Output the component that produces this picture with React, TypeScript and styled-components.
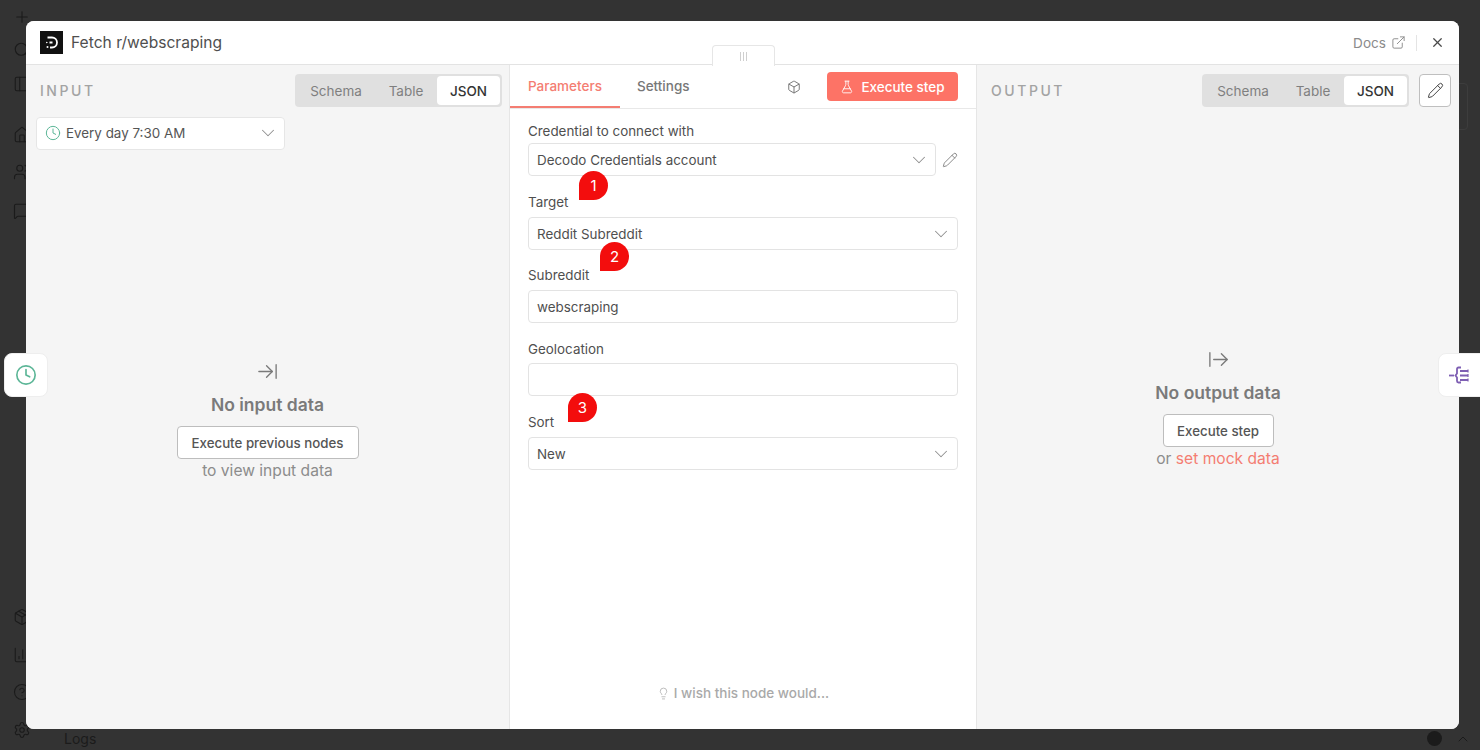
import React from "react";
import styled, { createGlobalStyle } from "styled-components";
import {
  ArrowRightFromLine,
  ArrowRightToLine,
  Box,
  ChartColumn,
  ChevronDown,
  ChevronUp,
  CircleHelp,
  Clock,
  ExternalLink,
  FlaskConical,
  House,
  Lightbulb,
  MessageSquare,
  PanelLeft,
  Pencil,
  Plus,
  Search,
  Settings,
  Users,
  Package,
  X,
} from "lucide-react";

const Global = createGlobalStyle`
  html, body { margin: 0; padding: 0; background: #333; }
  body { font-family: Inter, "Liberation Sans", sans-serif; -webkit-font-smoothing: antialiased; }
  * { box-sizing: border-box; }
`;

const Page = styled.div`
  position: relative;
  width: 1480px;
  height: 750px;
  overflow: hidden;
  background: #333333;
  display: grid;
  grid-template-columns: 44px 1fr;
`;

const Sidebar = styled.nav`
  display: flex;
  flex-direction: column;
  align-items: center;
  color: #1b1b1b;
`;

const RailIcon = styled.span<{ $mt: number }>`
  display: flex;
  margin-top: ${(p) => p.$mt}px;
`;

const Spacer = styled.div`
  flex: 1;
`;

const Main = styled.div`
  display: flex;
  flex-direction: column;
  justify-content: flex-end;
`;

const LogsBar = styled.div`
  height: 21px;
  display: flex;
  align-items: center;
  padding: 0 9px 2px 20px;
  color: #1b1b1b;
  font-size: 14px;
`;

const LogsLabel = styled.span`
  flex: 1;
`;

const LogsPopout = styled.span`
  width: 15px;
  height: 15px;
  border-radius: 50%;
  background: #1b1b1b;
  margin-right: 13px;
`;

const Modal = styled.div`
  position: absolute;
  left: 26px;
  top: 21px;
  width: 1433px;
  height: 708px;
  border-radius: 8px;
  background: #f5f5f5;
  overflow: hidden;
  display: flex;
  flex-direction: column;
`;

const Header = styled.header`
  height: 44px;
  flex: none;
  background: #fff;
  border-bottom: 1px solid #e3e3e3;
  display: flex;
  align-items: center;
  padding: 0 14px;
`;

const Logo = styled.svg`
  width: 23px;
  height: 23px;
  flex: none;
`;

const Title = styled.h1`
  margin: 0 0 0 8px;
  flex: 1;
  font-size: 15.6px;
  font-weight: 400;
  color: #4f4f4f;
`;

const DocsLink = styled.a`
  display: flex;
  align-items: center;
  gap: 5px;
  font-size: 13.6px;
  color: #8b8b8b;
`;

const Divider = styled.span`
  width: 1px;
  height: 16px;
  background: #e4e4e4;
  margin: 0 13px 0 10px;
`;

const CloseButton = styled.span`
  display: flex;
  color: #4a4a4a;
`;

const Columns = styled.div`
  flex: 1;
  min-height: 0;
  display: grid;
  grid-template-columns: 483px 468px 482px;
`;

const Panel = styled.section`
  background: #f5f5f5;
  display: flex;
  flex-direction: column;
  min-height: 0;
`;

const PanelHead = styled.div<{ $pr: number; $pl: number }>`
  height: 33px;
  margin-top: 9px;
  padding: 0 ${(p) => p.$pr}px 0 ${(p) => p.$pl}px;
  display: flex;
  align-items: center;
  justify-content: space-between;
`;

const PanelName = styled.h2`
  margin: 0;
  font-size: 14px;
  font-weight: 500;
  letter-spacing: 2.55px;
  color: #a3a3a3;
`;

const HeadRight = styled.div`
  display: flex;
  align-items: center;
  gap: 10px;
`;

const Segments = styled.div`
  height: 33px;
  width: 207px;
  padding: 2px;
  border-radius: 4px;
  background: #e0e0e0;
  display: flex;
  align-items: stretch;
`;

const Segment = styled.span<{ $on?: boolean; $w: number }>`
  width: ${(p) => p.$w}px;
  display: flex;
  align-items: center;
  justify-content: center;
  font-size: 13.5px;
  font-weight: ${(p) => (p.$on ? 500 : 400)};
  border-radius: 4px;
  background: ${(p) => (p.$on ? "#fff" : "transparent")};
  color: ${(p) => (p.$on ? "#333" : "#7f7f7f")};
`;

const EditButton = styled.span`
  width: 32px;
  height: 33px;
  display: flex;
  align-items: center;
  justify-content: center;
  background: #fff;
  border: 1px solid #bfbfbf;
  border-radius: 4px;
  color: #444;
`;

const RunPicker = styled.div`
  margin: 10px 0 0 10px;
  width: 249px;
  height: 33px;
  background: #fff;
  border: 1px solid #e6e6e6;
  border-radius: 4px;
  display: flex;
  align-items: center;
  padding: 0 5px 1px 8px;
  font-size: 13.4px;
  color: #555;
`;

const RunText = styled.span`
  flex: 1;
  margin-left: 5px;
`;

const Empty = styled.div<{ $pt: number }>`
  padding-top: ${(p) => p.$pt}px;
  display: flex;
  flex-direction: column;
  align-items: center;
  color: #7a7a7a;
`;

const EmptyTitle = styled.h3`
  margin: 11px 0 10px;
  font-size: 17.5px;
  line-height: 22px;
  font-weight: 600;
  color: #7a7a7a;
`;

const OutlineButton = styled.span<{ $w: number }>`
  width: ${(p) => p.$w}px;
  height: 33px;
  display: flex;
  align-items: center;
  justify-content: center;
  background: #fff;
  border: 1px solid #bdbdbd;
  border-radius: 4px;
  font-size: 13.3px;
  font-weight: 500;
  color: #555;
`;

const EmptyNote = styled.p`
  margin: 3px 0 0;
  font-size: 15.6px;
  line-height: 18px;
  color: #8c8c8c;
`;

const MockLink = styled.span`
  color: #f47d72;
`;

const Center = styled.section`
  position: relative;
  background: #fff;
  border-left: 1px solid #e6e6e6;
  border-right: 1px solid #e6e6e6;
  display: flex;
  flex-direction: column;
`;

const DragTab = styled.div`
  position: absolute;
  left: 202px;
  top: -20px;
  width: 63px;
  height: 21px;
  background: #fff;
  border: 1px solid #e6e6e6;
  border-bottom: none;
  border-radius: 4px 4px 0 0;
  display: flex;
  align-items: center;
  justify-content: center;
  gap: 1.5px;
`;

const DragLine = styled.i`
  width: 1.5px;
  height: 9px;
  background: #cfcfcf;
`;

const TabRow = styled.div`
  height: 44px;
  flex: none;
  border-bottom: 1px solid #e8e8e8;
  display: flex;
  align-items: flex-start;
  padding-right: 18px;
`;

const Tab = styled.span<{ $on?: boolean }>`
  height: 43px;
  padding: 1px 18px 0 ${(p) => (p.$on ? 18 : 17)}px;
  display: flex;
  align-items: center;
  font-size: 13.5px;
  font-weight: 500;
  color: ${(p) => (p.$on ? "#f47d72" : "#777")};
  border-bottom: 2px solid ${(p) => (p.$on ? "#f47d72" : "transparent")};
`;

const CubeSlot = styled.span`
  margin: 15px 26px 0 auto;
  display: flex;
  color: #666;
`;

const RunButton = styled.span`
  margin-top: 7px;
  width: 131px;
  height: 29px;
  background: #fd7366;
  border-radius: 4px;
  color: #fff;
  font-size: 13.5px;
  font-weight: 500;
  display: flex;
  align-items: center;
  justify-content: center;
  gap: 7px;
`;

const Form = styled.div`
  flex: 1;
  display: flex;
  flex-direction: column;
  padding: 13px 18px 0;
`;

const Field = styled.div<{ $mt?: number }>`
  position: relative;
  margin-top: ${(p) => p.$mt ?? 0}px;
`;

const FieldLabel = styled.label<{ $gap: number }>`
  display: block;
  font-size: 13.4px;
  line-height: 18px;
  color: #4f4f4f;
  margin-bottom: ${(p) => p.$gap}px;
`;

const FieldRow = styled.div`
  display: flex;
  align-items: center;
  gap: 6px;
  color: #777;
`;

const Control = styled.div`
  flex: 1;
  height: 33px;
  background: #fff;
  border: 1px solid #e3e3e3;
  border-radius: 4px;
  display: flex;
  align-items: center;
  justify-content: space-between;
  padding: 0 5px 0 8px;
  font-size: 13.4px;
  color: #4f4f4f;
`;

const Badge = styled.span<{ $left: number; $top: number }>`
  position: absolute;
  left: ${(p) => p.$left}px;
  top: ${(p) => p.$top}px;
  width: 29px;
  height: 29px;
  background: #f30d0d;
  border-radius: 50% 50% 50% 0;
  color: #fff;
  font-size: 15px;
  display: flex;
  align-items: center;
  justify-content: center;
`;

const Wish = styled.div`
  margin-top: auto;
  padding-bottom: 28px;
  display: flex;
  align-items: center;
  justify-content: center;
  gap: 4px;
  font-size: 13.5px;
  font-weight: 500;
  color: #a9a9a9;
`;

const SideTab = styled.div<{ $side: "left" | "right" }>`
  position: absolute;
  top: 353px;
  ${(p) => (p.$side === "left" ? "left: 4px; width: 44px; border-radius: 8px;" : "left: 1438px; width: 50px; border-radius: 8px; padding-right: 8px;")}
  height: 44px;
  background: #fff;
  border: 1px solid #eeeeee;
  display: flex;
  align-items: center;
  justify-content: center;
`;

const GhostCard = styled.div`
  position: absolute;
  left: 1450px;
  top: 83px;
  width: 18px;
  height: 47px;
  border: 1px solid #3d3d3d;
  border-radius: 4px;
`;

const Chevron = <ChevronDown size={22} strokeWidth={1.1} color="#8f8f8f" />;

export default function App() {
  return (
    <Page>
      <Global />
      <Sidebar>
        <RailIcon $mt={8}><Plus size={18} strokeWidth={1.5} /></RailIcon>
        <RailIcon $mt={15}><Search size={18} strokeWidth={1.5} /></RailIcon>
        <RailIcon $mt={16}><PanelLeft size={18} strokeWidth={1.5} /></RailIcon>
        <RailIcon $mt={33}><House size={18} strokeWidth={1.5} /></RailIcon>
        <RailIcon $mt={19}><Users size={18} strokeWidth={1.5} /></RailIcon>
        <RailIcon $mt={21}><MessageSquare size={18} strokeWidth={1.5} /></RailIcon>
        <Spacer />
        <RailIcon $mt={0}><Package size={18} strokeWidth={1.5} /></RailIcon>
        <RailIcon $mt={20}><ChartColumn size={18} strokeWidth={1.5} /></RailIcon>
        <RailIcon $mt={19}><CircleHelp size={18} strokeWidth={1.5} /></RailIcon>
        <RailIcon $mt={20}><Settings size={18} strokeWidth={1.5} /></RailIcon>
        <RailIcon $mt={11} />
      </Sidebar>
      <Main>
        <LogsBar>
          <LogsLabel>Logs</LogsLabel>
          <LogsPopout />
          <ChevronUp size={16} strokeWidth={1.5} />
        </LogsBar>
      </Main>
      <GhostCard />

      <Modal>
        <Header>
          <Logo viewBox="0 0 23 23" aria-hidden>
            <rect width="23" height="23" fill="#111" />
            <path d="M7.500 6.500h4.500a5 5 0 0 1 0 10H10" fill="none" stroke="#fff" strokeWidth="1.800" />
            <path d="M9.500 11.500h3" fill="none" stroke="#fff" strokeWidth="1.800" />
            <circle cx="7.500" cy="16" r="1" fill="#fff" />
            <circle cx="6.800" cy="11.500" r="0.800" fill="#fff" />
          </Logo>
          <Title>Fetch r/webscraping</Title>
          <DocsLink>
            Docs
            <ExternalLink size={15} strokeWidth={1.5} />
          </DocsLink>
          <Divider />
          <CloseButton><X size={15} strokeWidth={2} /></CloseButton>
        </Header>

        <Columns>
          <Panel>
            <PanelHead $pl={14} $pr={7}>
              <PanelName>INPUT</PanelName>
              <Segments>
                <Segment $w={78}>Schema</Segment>
                <Segment $w={62}>Table</Segment>
                <Segment $w={63} $on>JSON</Segment>
              </Segments>
            </PanelHead>
            <RunPicker>
              <Clock size={16} strokeWidth={1.5} color="#5cb697" />
              <RunText>Every day 7:30 AM</RunText>
              {Chevron}
            </RunPicker>
            <Empty $pt={210}>
              <ArrowRightToLine size={23} strokeWidth={1.4} />
              <EmptyTitle>No input data</EmptyTitle>
              <OutlineButton $w={182}>Execute previous nodes</OutlineButton>
              <EmptyNote>to view input data</EmptyNote>
            </Empty>
          </Panel>

          <Center>
            <DragTab>
              <DragLine />
              <DragLine />
              <DragLine />
            </DragTab>
            <TabRow>
              <Tab $on>Parameters</Tab>
              <Tab>Settings</Tab>
              <CubeSlot><Box size={14} strokeWidth={1.5} /></CubeSlot>
              <RunButton>
                <FlaskConical size={14} strokeWidth={1.5} />
                Execute step
              </RunButton>
            </TabRow>
            <Form>
              <Field>
                <FieldLabel $gap={3}>Credential to connect with</FieldLabel>
                <FieldRow>
                  <Control>Decodo Credentials account{Chevron}</Control>
                  <Pencil size={16} strokeWidth={1.3} />
                </FieldRow>
              </Field>
              <Field $mt={17}>
                <Badge $left={51} $top={-22}>1</Badge>
                <FieldLabel $gap={6}>Target</FieldLabel>
                <FieldRow><Control>Reddit Subreddit{Chevron}</Control></FieldRow>
              </Field>
              <Field $mt={16}>
                <Badge $left={72} $top={-24}>2</Badge>
                <FieldLabel $gap={6}>Subreddit</FieldLabel>
                <FieldRow><Control>webscraping</Control></FieldRow>
              </Field>
              <Field $mt={17}>
                <FieldLabel $gap={5}>Geolocation</FieldLabel>
                <FieldRow><Control /></FieldRow>
              </Field>
              <Field $mt={17}>
                <Badge $left={40} $top={-20}>3</Badge>
                <FieldLabel $gap={6}>Sort</FieldLabel>
                <FieldRow><Control>New{Chevron}</Control></FieldRow>
              </Field>
              <Wish>
                <Lightbulb size={13} strokeWidth={1.4} />
                I wish this node would...
              </Wish>
            </Form>
          </Center>

          <Panel>
            <PanelHead $pl={14} $pr={8}>
              <PanelName>OUTPUT</PanelName>
              <HeadRight>
                <Segments>
                  <Segment $w={78}>Schema</Segment>
                  <Segment $w={62}>Table</Segment>
                  <Segment $w={63} $on>JSON</Segment>
                </Segments>
                <EditButton><Pencil size={17} strokeWidth={1.4} /></EditButton>
              </HeadRight>
            </PanelHead>
            <Empty $pt={241}>
              <ArrowRightFromLine size={23} strokeWidth={1.4} />
              <EmptyTitle>No output data</EmptyTitle>
              <OutlineButton $w={111}>Execute step</OutlineButton>
              <EmptyNote>or <MockLink>set mock data</MockLink></EmptyNote>
            </Empty>
          </Panel>
        </Columns>
      </Modal>

      <SideTab $side="left">
        <Clock size={22} strokeWidth={1.8} color="#5cb697" />
      </SideTab>
      <SideTab $side="right">
        <svg width="22" height="18" viewBox="0 0 22 18" fill="none" stroke="#7e5fb3" strokeWidth="1.8" aria-hidden>
          <path d="M1 9.500h5" />
          <path d="M13 1.500h-2.500a1.500 1.500 0 0 0-1.500 1.500v4.500l-1.500 2 1.500 2v3.500a1.500 1.500 0 0 0 1.500 1.500H13" />
          <path d="M12 5h8M12 9.500h8M12 14h8" />
          <path d="M20 3.500v3M20 8v3M20 12.500v3" strokeWidth="1.200" />
        </svg>
      </SideTab>
    </Page>
  );
}
